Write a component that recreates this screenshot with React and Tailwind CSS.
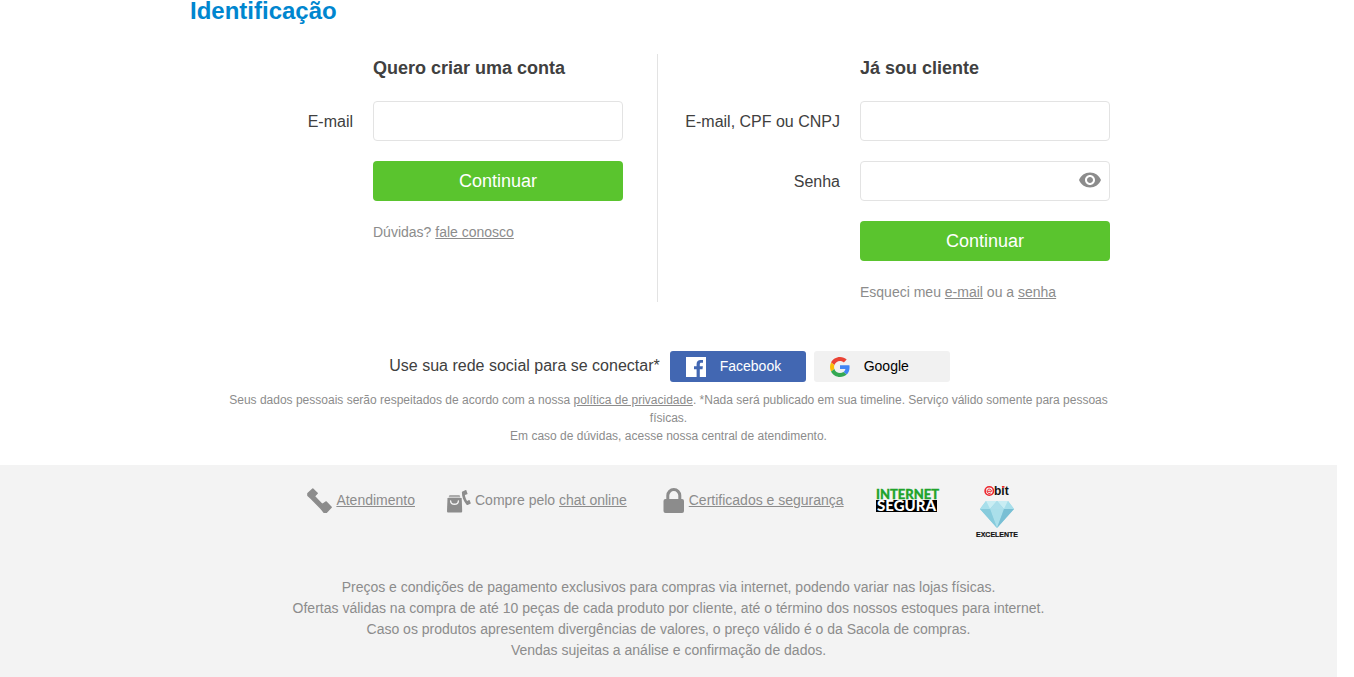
import React from "react";

const inputClass =
  "h-10 w-full rounded border border-[#e3e3e3] bg-white px-3 text-base text-[#404040] outline-none";
const submitClass =
  "block h-10 w-[250px] rounded bg-[#5ac42e] text-lg text-white";
const headingClass =
  "ml-auto w-[250px] pb-[18px] text-lg leading-[29px] font-bold text-[#404040]";
const hintClass = "mt-[21px] text-sm leading-5 text-[#8c8c8c]";

function Field({ id, label, type = "text", children }) {
  return (
    <div className="mb-5 flex items-center justify-end gap-5">
      <label htmlFor={id} className="pt-0.5 text-base text-[#404040]">
        {label}
      </label>
      <div className="relative w-[250px]">
        <input id={id} name={id} type={type} className={inputClass} />
        {children}
      </div>
    </div>
  );
}

function EyeIcon() {
  return (
    <svg viewBox="1 4 22 16" className="h-4 w-[22px]" fill="#8c8c8c" aria-hidden="true">
      <path d="M12 4.5C7 4.5 2.73 7.61 1 12c1.73 4.39 6 7.5 11 7.5s9.27-3.11 11-7.5c-1.73-4.39-6-7.5-11-7.5zM12 17c-2.76 0-5-2.24-5-5s2.24-5 5-5 5 2.24 5 5-2.24 5-5 5zm0-8c-1.66 0-3 1.34-3 3s1.34 3 3 3 3-1.34 3-3-1.34-3-3-3z" />
    </svg>
  );
}

function FacebookIcon() {
  return (
    <svg viewBox="0 0 20 20" className="h-5 w-5" aria-hidden="true">
      <path fill="#fff" d="M0 0h20v20h-6.2v-7.7h2.7l.4-3.1h-3.1v-2c0-.9.3-1.5 1.6-1.5h1.6V3c-.3 0-1.3-.1-2.4-.1-2.4 0-4 1.4-4 4.1v2.2H8v3.1h2.600V20H0z" />
    </svg>
  );
}

function GoogleIcon() {
  return (
    <svg viewBox="0 0 48 48" className="h-5 w-5" aria-hidden="true">
      <path fill="#EA4335" d="M24 9.5c3.54 0 6.71 1.22 9.21 3.6l6.85-6.85C35.9 2.38 30.47 0 24 0 14.62 0 6.51 5.38 2.56 13.22l7.98 6.19C12.43 13.72 17.74 9.5 24 9.5z" />
      <path fill="#4285F4" d="M46.98 24.55c0-1.57-.15-3.09-.38-4.55H24v9.02h12.94c-.58 2.96-2.26 5.48-4.78 7.18l7.73 6c4.51-4.18 7.09-10.36 7.09-17.65z" />
      <path fill="#FBBC05" d="M10.53 28.59c-.48-1.45-.76-2.99-.76-4.59s.27-3.14.76-4.59l-7.98-6.19C.92 16.46 0 20.12 0 24s.92 7.54 2.56 10.78l7.97-6.19z" />
      <path fill="#34A853" d="M24 48c6.48 0 11.93-2.13 15.89-5.81l-7.73-6c-2.15 1.45-4.92 2.3-8.16 2.3-6.26 0-11.57-4.22-13.47-9.91l-7.98 6.19C6.51 42.62 14.62 48 24 48z" />
    </svg>
  );
}

function PhoneIcon() {
  return (
    <svg viewBox="0 0 25 25" className="h-[25px] w-[25px]" fill="#8c8c8c" stroke="#8c8c8c" strokeWidth="1.4" strokeLinejoin="round" aria-hidden="true">
      <path d="M5.800.9 10.200 5.200 7.300 8.200 15.200 16.500 19.200 13.900 24.200 19.200 19.500 24.200H17L14 20.600 4.200 10.500.9 7.500V5.600z" />
    </svg>
  );
}

function ChatIcon() {
  return (
    <svg viewBox="0 0 24 24" className="h-6 w-6" fill="#8c8c8c" aria-hidden="true">
      <path opacity=".7" d="M2.500 6h10l1 2.500h-12z" />
      <path d="M.5 9h14.200l.5 13.200c0 .8-.6 1.300-1.400 1.300H1.400c-.8 0-1.400-.5-1.400-1.300z" />
      <path d="M3.600 12c.3 4.300 7.500 4.300 7.800 0" fill="none" stroke="#f3f3f3" strokeWidth="1.400" strokeLinecap="round" />
      <path d="m15.500 2.400 3.200-1.300c.4-.1.600 0 .7.300l1.100 3.200c.1.300 0 .5-.3.600l-2.300.9c.2 1.900 1 4 2.200 5.800l1.900-.9c.3-.1.500 0 .6.300l1.100 2.800c.1.300 0 .5-.3.700l-2.800 1.200c-.4.100-.7 0-1-.3-3.200-3.600-4.800-8-4.700-12.600 0-.4.200-.6.600-.7z" />
    </svg>
  );
}

function LockIcon() {
  return (
    <svg viewBox="0 0 22 25" className="h-[25px] w-[22px]" aria-hidden="true">
      <path d="M4.800 13V7.600a6 6 0 0 1 12 0V13" fill="none" stroke="#8c8c8c" strokeWidth="3" />
      <rect x=".5" y="11" width="20.500" height="14" rx="2" fill="#8c8c8c" />
    </svg>
  );
}

function InternetSeguraLogo() {
  return (
    <svg viewBox="0 0 62 26" className="h-[26px] w-[62px] overflow-visible" role="img" aria-label="Internet Segura">
      <rect x="0" y="12" width="61" height="12" fill="#000" />
      <g fontFamily="Lato, 'Liberation Sans', sans-serif" fontWeight="900">
        <text x="0" y="11" fontSize="13" fill="#20a32b" stroke="#20a32b" strokeWidth="0.3">INTERNET</text>
        <text x="1" y="23" fontSize="15" fill="#fff">SEGURA</text>
      </g>
    </svg>
  );
}

function EbitLogo() {
  return (
    <svg viewBox="0 0 46 54" className="h-[54px] w-[46px]" role="img" aria-label="Ebit excelente">
      <circle cx="15.300" cy="6" r="4.200" fill="none" stroke="#ee252c" strokeWidth="1.600" />
      <path d="M13.200 6.300h4.300a2.200 2.200 0 1 0-.7 1.600" fill="none" stroke="#ee252c" strokeWidth="1" />
      <text x="20" y="10" fontFamily="'Liberation Sans', sans-serif" fontWeight="700" fontSize="12" fill="#111">bit</text>
      <path d="M28 1h2.400v1.700H28z" fill="#ee252c" />
      <path d="M12 16h22l6 8-17 19L6 24z" fill="#91d4e5" />
      <path d="m12 16 4 8H6zM34 16l6 8H30z" fill="#a8dfeb" />
      <path d="M12 16h11l-7 8zM34 16H23l7 8z" fill="#c9edf3" />
      <path d="m23 16 7 8H16z" fill="#addfeb" />
      <path d="M16 24h14l-7 19z" fill="#aadfea" />
      <path d="M6 24h10l7 19z" fill="#87cbdc" />
      <path d="M30 24h10L23 43z" fill="#79bfd4" />
      <text x="23" y="52" textAnchor="middle" fontFamily="'Liberation Sans', sans-serif" fontWeight="700" fontSize="7" fill="#111" stroke="#111" strokeWidth="0.2">EXCELENTE</text>
    </svg>
  );
}

export default function App() {
  return (
    <div className="bg-white pr-[17px] font-['Liberation_Sans',Arial,sans-serif]">
      <main className="mx-auto max-w-[957px]">
        <h1 className="text-2xl leading-[22px] font-bold text-[#0086cf]">Identificação</h1>

        <div className="mt-8 grid grid-cols-[468px_1fr]">
          <form className="border-r border-[#e3e3e3] pr-[34px]" onSubmit={(e) => e.preventDefault()}>
            <h2 className={headingClass}>Quero criar uma conta</h2>
            <Field id="novo-email" label="E-mail" type="email" />
            <div className="ml-auto w-[250px]">
              <button type="submit" className={submitClass}>Continuar</button>
              <p className={hintClass}>
                Dúvidas? <a href="#contato" className="underline">fale conosco</a>
              </p>
            </div>
          </form>

          <form className="pr-[37px]" onSubmit={(e) => e.preventDefault()}>
            <h2 className={headingClass}>Já sou cliente</h2>
            <Field id="login" label="E-mail, CPF ou CNPJ" />
            <Field id="senha" label="Senha" type="password">
              <button type="button" aria-label="Mostrar senha" className="absolute top-[11px] right-[9px]">
                <EyeIcon />
              </button>
            </Field>
            <div className="ml-auto w-[250px]">
              <button type="submit" className={submitClass}>Continuar</button>
              <p className={hintClass}>
                Esqueci meu <a href="#email" className="underline">e-mail</a> ou a{" "}
                <a href="#esqueci-senha" className="underline">senha</a>
              </p>
            </div>
          </form>
        </div>

        <div className="mt-[49px] flex items-center justify-center pl-0.5">
          <p className="mr-2.5 pb-0.5 text-base text-[#404040]">Use sua rede social para se conectar*</p>
          <button type="button" className="mr-2 flex h-[31px] w-[136px] items-center gap-3.5 rounded-[3px] bg-[#4267b2] pl-4 text-sm text-white">
            <FacebookIcon />
            <span className="pb-0.5">Facebook</span>
          </button>
          <button type="button" className="flex h-[31px] w-[136px] items-center gap-3.5 rounded-[3px] bg-[#f1f1f1] pl-4 text-sm text-black">
            <GoogleIcon />
            <span className="pb-0.5">Google</span>
          </button>
        </div>
        <p className="mt-[9px] px-5 pb-5 text-center text-xs leading-[18px] text-[#8c8c8c]">
          Seus dados pessoais serão respeitados de acordo com a nossa{" "}
          <a href="#privacidade" className="underline">política de privacidade</a>. *Nada será
          publicado em sua timeline. Serviço válido somente para pessoas físicas.
          <br />
          Em caso de dúvidas, acesse nossa central de atendimento.
        </p>
      </main>

      <footer className="bg-[#f3f3f3] pt-5 pb-4 text-sm text-[#8c8c8c]">
        <ul className="flex items-start justify-center pr-2.5">
          <li className="flex h-[31px] items-center gap-1">
            <PhoneIcon />
            <a href="#atendimento" className="pb-0.5 underline">Atendimento</a>
          </li>
          <li className="ml-8 flex h-[31px] items-center gap-1">
            <ChatIcon />
            <span className="pb-0.5">Compre pelo <a href="#chat" className="underline">chat online</a></span>
          </li>
          <li className="ml-9 flex h-[31px] items-center gap-1">
            <LockIcon />
            <a href="#seguranca" className="pb-0.5 underline">Certificados e segurança</a>
          </li>
          <li className="ml-8 flex h-[31px] items-center">
            <InternetSeguraLogo />
          </li>
          <li className="ml-9">
            <EbitLogo />
          </li>
        </ul>
        <div className="mt-[38px] text-center leading-[21px]">
          <p>Preços e condições de pagamento exclusivos para compras via internet, podendo variar nas lojas físicas.</p>
          <p>Ofertas válidas na compra de até 10 peças de cada produto por cliente, até o término dos nossos estoques para internet.</p>
          <p>Caso os produtos apresentem divergências de valores, o preço válido é o da Sacola de compras.</p>
          <p>Vendas sujeitas a análise e confirmação de dados.</p>
        </div>
      </footer>
    </div>
  );
}
